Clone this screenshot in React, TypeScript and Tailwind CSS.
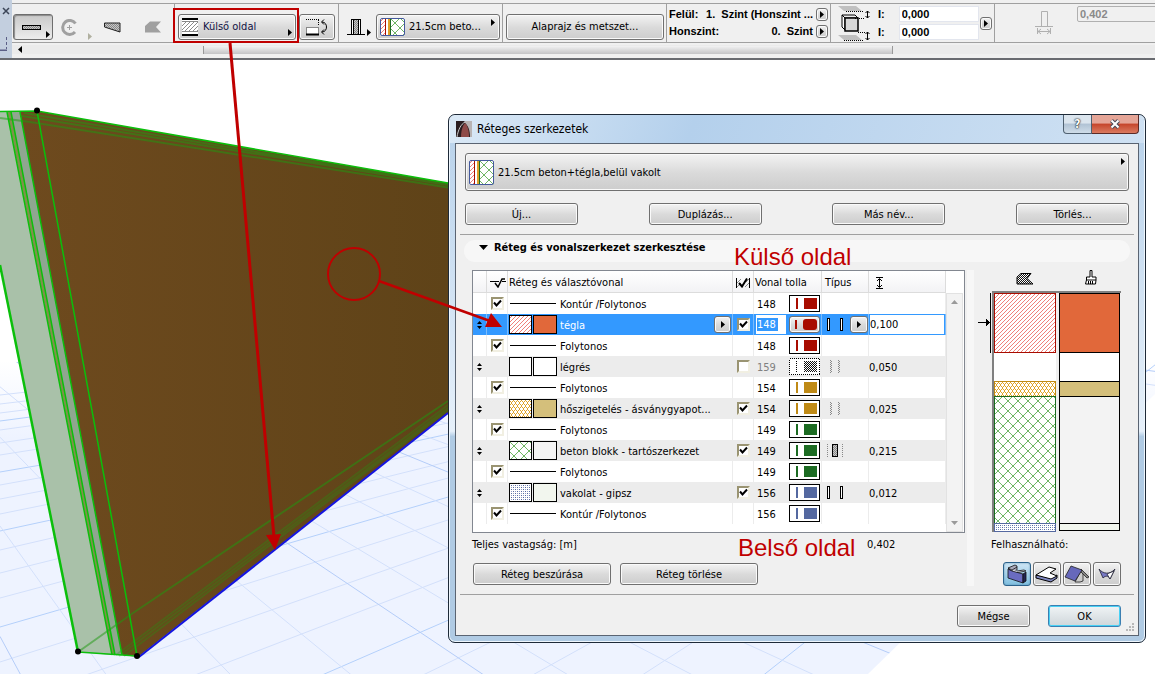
import React from "react";

type Layer = {
    kind: "line" | "skin";
    name: string;
    pen: string;
    color?: string;
    hatch?: string;
    fill?: string;
    checked?: boolean;
    selected?: boolean;
    type?: "shell" | "light" | "core";
    thickness?: string;
};

const layers: Layer[] = [
    { kind: "line", name: "Kontúr /Folytonos", pen: "148", color: "#a80c00" },
    { kind: "skin", name: "tégla", pen: "148", color: "#a80c00", hatch: "url(#brick)", fill: "#e1683a", checked: true, selected: true, type: "shell", thickness: "0,100" },
    { kind: "line", name: "Folytonos", pen: "148", color: "#a80c00" },
    { kind: "skin", name: "légrés", pen: "159", hatch: "#fff", fill: "#fff", checked: false, type: "light", thickness: "0,050" },
    { kind: "line", name: "Folytonos", pen: "154", color: "#bf8a16" },
    { kind: "skin", name: "hőszigetelés - ásványgyapot...", pen: "154", color: "#bf8a16", hatch: "url(#wool)", fill: "#d4bf7b", checked: true, type: "light", thickness: "0,025" },
    { kind: "line", name: "Folytonos", pen: "149", color: "#1c6b22" },
    { kind: "skin", name: "beton blokk - tartószerkezet", pen: "149", color: "#1c6b22", hatch: "url(#block)", fill: "#f3f3f3", checked: true, type: "core", thickness: "0,215" },
    { kind: "line", name: "Folytonos", pen: "149", color: "#1c6b22" },
    { kind: "skin", name: "vakolat - gipsz", pen: "156", color: "#5468a0", hatch: "url(#plaster)", fill: "#f2f6ee", checked: true, type: "shell", thickness: "0,012" },
    { kind: "line", name: "Kontúr /Folytonos", pen: "156", color: "#5468a0" },
];

const button =
    "rounded-[3px] border border-[#707070] bg-linear-to-b from-[#f3f3f3] from-0% via-[#dadada] via-52% to-[#cdcdcd] shadow-[inset_0_0_0_1px_#fafafa] whitespace-nowrap";

function Patterns() {
    return (
        <svg width="0" height="0" className="absolute" aria-hidden="true">
            <defs>
                <pattern id="brick" width="4" height="4" patternUnits="userSpaceOnUse">
                    <rect width="4" height="4" fill="#fff" />
                    <path d="M0 3h1v1h-1zM1 2h1v1h-1zM2 1h1v1h-1zM3 0h1v1h-1z" fill="#f0807a" />
                </pattern>
                <pattern id="wool" width="4" height="6" patternUnits="userSpaceOnUse">
                    <rect width="4" height="6" fill="#fff" />
                    <path d="M0 0h1v2h-1zM1 2h1v1h-1zM2 3h1v2h-1zM1 5h1v1h-1zM3 2h1v1h-1zM3 5h1v1h-1z" fill="#e0a224" />
                </pattern>
                <pattern id="block" width="10" height="10" patternUnits="userSpaceOnUse">
                    <rect width="10" height="10" fill="#fff" />
                    <path d="M0 0L10 10M10 0L0 10" stroke="#5fae52" strokeWidth="0.900" />
                </pattern>
                <pattern id="plaster" width="4" height="4" patternUnits="userSpaceOnUse">
                    <rect width="4" height="4" fill="#fff" />
                    <path d="M0 0h1v1h-1zM2 2h1v1h-1z" fill="#5468a0" />
                    <path d="M2 0h1v1h-1zM0 2h1v1h-1z" fill="#8c9ac4" />
                </pattern>
                <pattern id="gray" width="2" height="2" patternUnits="userSpaceOnUse">
                    <rect width="2" height="2" fill="#fff" />
                    <path d="M0 0h1v1h-1zM1 1h1v1h-1z" fill="#111" />
                </pattern>
                <pattern id="mid" width="2" height="2" patternUnits="userSpaceOnUse">
                    <rect width="2" height="2" fill="#c8c8c8" />
                    <path d="M0 0h1v1h-1zM1 1h1v1h-1z" fill="#888" />
                </pattern>
                <pattern id="diag" width="4" height="4" patternUnits="userSpaceOnUse">
                    <rect width="4" height="4" fill="#fff" />
                    <path d="M0 3h1v1h-1zM1 2h1v1h-1zM2 1h1v1h-1zM3 0h1v1h-1z" fill="#8a8a8a" />
                </pattern>
            </defs>
        </svg>
    );
}

function Triangle({ className = "" }: { className?: string }) {
    return (
        <svg viewBox="0 0 4 7" className={`h-[7px] w-1 shrink-0 ${className}`} fill="currentColor" aria-hidden="true">
            <path d="M0 0L4 3.500L0 7z" />
        </svg>
    );
}

function CompositeIcon({ className }: { className: string }) {
    return (
        <svg viewBox="0 0 25 25" preserveAspectRatio="xMinYMin slice" className={`shrink-0 rounded-[2px] outline-1 -outline-offset-1 outline-[#44599c] ${className}`} shapeRendering="crispEdges" aria-hidden="true">
            <rect width="25" height="25" fill="#fff" />
            <rect x="1" width="4" height="25" fill="url(#brick)" />
            <rect x="5" width="1" height="25" fill="#a80c00" />
            <rect x="8" width="2" height="25" fill="#dfa02a" />
            <rect x="10" width="1" height="25" fill="#1c6b22" />
            <rect x="11" width="14" height="25" fill="url(#block)" />
        </svg>
    );
}

function ArrowButton({ label }: { label: string }) {
    return (
        <button aria-label={label} className={`${button} flex h-[13px] w-3 items-center justify-center`}>
            <Triangle />
        </button>
    );
}

function Toolbar() {
    const group = "relative flex w-[164px] shrink-0 border-r border-b border-[#a0a0a0] h-[39px]";
    const field = "h-4 w-20 border border-[#e3e6ee] bg-white px-0.5 text-[11px] leading-none outline-none";
    return (
        <header className="h-[60px] overflow-hidden border-b-2 border-[#696b70] bg-[#f0f0f0]">
            <div className="flex h-[58px]">
                <div className="flex w-3 shrink-0 flex-col justify-between bg-[#c3cfdf] pt-[7px] pb-[7px]">
                    <button aria-label="Bezárás" className="flex justify-center">
                        <svg viewBox="0 0 8 8" className="size-2" stroke="#3c4658" strokeWidth="1.500">
                            <path d="M1 1l6 6M7 1l-6 6" />
                        </svg>
                    </button>
                    <svg viewBox="0 0 12 15" className="h-[15px] w-3" stroke="#5b5f86" fill="none">
                        <path d="M6.500 1v12" strokeDasharray="3 2" />
                        <path d="M0 14.500h7" strokeWidth="2" />
                    </svg>
                </div>
                <div className="min-w-0 flex-1">
                    <div className="mt-[3px] flex overflow-hidden border-t border-[#a0a0a0]">
                        <div className="flex h-[39px] w-[163px] shrink-0 items-center border-r border-b border-[#a0a0a0] pt-2">
                            <button aria-label="Egyenes fal" className="relative ml-px flex h-[26px] w-10 items-center justify-center rounded-[3px] border border-[#6e6e6e] bg-linear-to-b from-[#c9c9c9] to-[#ececec] shadow-[inset_1px_1px_1px_#8a8a8a]">
                                <svg viewBox="0 0 19 5" className="mr-1 h-[5px] w-[19px]" shapeRendering="crispEdges">
                                    <rect x="0.500" y="0.500" width="18" height="4" fill="url(#mid)" stroke="#000" />
                                </svg>
                                <Triangle className="absolute right-0.5 bottom-px" />
                            </button>
                            <button aria-label="Íves fal" className="ml-2 text-[#a0a0a0]">
                                <svg viewBox="0 0 17 17" className="size-[17px]" fill="none" stroke="currentColor">
                                    <path d="M14.500 4.500A7 7 0 1 0 14 13" strokeWidth="3" />
                                    <path d="M6 8.500h5M8.500 6v5" />
                                </svg>
                            </button>
                            <Triangle className="mt-[18px] ml-2.5 text-[#b0b0a0]" />
                            <button aria-label="Trapéz fal" className="ml-3">
                                <svg viewBox="0 0 17 11" className="h-[11px] w-[17px]">
                                    <path d="M0.500 1h15.500v9L0.500 5z" fill="url(#mid)" stroke="#222" />
                                </svg>
                            </button>
                            <button aria-label="Sokszög fal" className="ml-6">
                                <svg viewBox="0 0 17 12" className="h-3 w-[17px]">
                                    <path d="M5 0.500h11L11 6l5 5.500H0V5z" fill="#a0a0a0" />
                                </svg>
                            </button>
                        </div>
                        <div className={`${group} items-center pt-2 pl-[3px]`}>
                            <button className={`${button} relative flex h-[26px] w-[118px] items-center pl-[3px] text-[11px] text-[#121244]`}>
                                <svg viewBox="0 0 16 18" className="mr-[5px] h-[18px] w-4" shapeRendering="crispEdges">
                                    <rect y="2" width="16" height="14" fill="#fff" />
                                    <rect y="4" width="16" height="10" fill="url(#diag)" />
                                    <path d="M0 3.500h16M0 13.500h16" stroke="#888" />
                                    <path d="M0 1h16M0 17h16" stroke="#000" strokeWidth="2" />
                                </svg>
                                Külső oldal
                                <Triangle className="absolute right-[3px] bottom-[3px] text-black" />
                            </button>
                            <button aria-label="Tükrözés a referenciavonalra" className={`${button} ml-[3px] flex h-[26px] w-9 items-center justify-center`}>
                                <svg viewBox="0 0 22 18" className="h-[18px] w-[22px]" fill="none" stroke="#000">
                                    <path d="M0 1.500h13M12.500 2v6" strokeDasharray="1 1" />
                                    <rect x="0.500" y="9.500" width="12" height="7" fill="#fff" stroke="#888" />
                                    <path d="M0 16.500h13" strokeWidth="2" />
                                    <path d="M16 4c6 0 6 10 0 10M18 1.500L15.500 4L18 6.500M18 11.500L15.500 14L18 16.500" />
                                </svg>
                            </button>
                        </div>
                        <div className={`${group} items-center pt-2`}>
                            <button aria-label="Szerkezet" className="ml-2 flex items-end">
                                <svg viewBox="0 0 18 17" className="h-[17px] w-[18px]" shapeRendering="crispEdges">
                                    <rect x="4.500" y="0.500" width="9" height="15" fill="#fff" stroke="#000" />
                                    <rect x="6.500" y="0.500" width="5" height="15" fill="url(#mid)" stroke="#000" />
                                    <path d="M0 15.500h18" stroke="#000" />
                                </svg>
                                <Triangle className="ml-0.5" />
                            </button>
                            <button className={`${button} relative ml-[5px] flex h-[26px] w-[124px] items-center gap-1 pl-[3px] text-[11px]`}>
                                <CompositeIcon className="h-[18px] w-[25px]" />
                                21.5cm beto...
                                <Triangle className="absolute top-1 right-1" />
                            </button>
                        </div>
                        <div className={`${group} items-center pt-2 pl-[3px]`}>
                            <button className={`${button} h-[26px] w-[158px] text-[11px]`}>Alaprajz és metszet...</button>
                        </div>
                        <div className={`${group} flex-col gap-1 pt-1 pr-0.5 pl-0.5 font-['Liberation_Sans',sans-serif] text-[11px] leading-[13px] font-bold`}>
                            <div className="flex">
                                <span className="mr-auto">Felül:</span>
                                <span className="mr-[3px]">1.&nbsp; Szint (Honszint ...</span>
                                <ArrowButton label="Felső szint választása" />
                            </div>
                            <div className="flex">
                                <span className="mr-auto">Honszint:</span>
                                <span className="mr-[3px]">0.&nbsp; Szint</span>
                                <ArrowButton label="Honszint választása" />
                            </div>
                        </div>
                        <div className={`${group} items-center pl-[7px] font-['Liberation_Sans',sans-serif] text-[11px] font-bold`}>
                            <svg viewBox="0 0 34 36" className="h-9 w-[34px]" stroke="#000" fill="none">
                                <path d="M0 1h18l6 5H6zM0 30h18l6 5H6z" fill="#c0c0c0" stroke="none" />
                                <path d="M4 10l3 3h13l-3-3z" fill="#eee" />
                                <path d="M4 10v12l3 3v-12z" fill="#fff" />
                                <rect x="7" y="13" width="13" height="13" fill="#d8d8d8" strokeWidth="1.500" />
                                <path d="M8 6.500h18M17 13.500h9M20 27.500h7M6 35.500h20" strokeDasharray="1 1" />
                                <path d="M29.500 6v7M27.500 8l2-2l2 2M27.500 11l2 2l2-2M29.500 27v8M27.500 29l2-2l2 2M27.500 33l2 2l2-2" />
                            </svg>
                            <div className="ml-1.5 flex flex-col gap-0.5">
                                <label className="flex items-center gap-3.5">
                                    I:
                                    <input className={field} defaultValue="0,000" />
                                </label>
                                <label className="flex items-center gap-3.5">
                                    I:
                                    <input className={field} defaultValue="0,000" />
                                </label>
                            </div>
                            <span className="ml-px">
                                <ArrowButton label="Magasság beállítása" />
                            </span>
                        </div>
                        <div className="flex h-[39px] flex-1 border-b border-[#a0a0a0] pt-0.5 pl-10">
                            <svg viewBox="0 0 18 24" className="mt-[5px] h-6 w-[18px] shrink-0" fill="none" stroke="#b0b0b0">
                                <path d="M6.500 15V0.500h6V15M0 15.500h18M2.500 17v6M15.500 17v6M3 20.500h12M6 18l-3 2.500l3 2.500M12 18l3 2.500l-3 2.500" />
                            </svg>
                            <input
                                disabled
                                aria-label="Vastagság"
                                defaultValue="0,402"
                                className="ml-6 h-4 w-[120px] shrink-0 rounded-[2px] border border-[#b0b0b0] bg-[#f0f0f0] px-0.5 font-['Liberation_Sans',sans-serif] text-[11px] font-bold text-[#8a8a8a]"
                            />
                        </div>
                    </div>
                    <div className="mt-0.5 flex h-[9px] items-center bg-[#ebebeb]">
                        <Triangle className="mr-[181px] ml-1.5 rotate-180" />
                        <div className="h-2 w-[690px] shrink-0 border-x border-[#999] bg-linear-to-b from-[#f2f2f2] to-[#c4c4c6]" />
                    </div>
                </div>
            </div>
        </header>
    );
}

const alongRight = [395, 404, 413, 421, 430, 443, 455, 472, 485, 499, 514, 531, 550, 573, 598, 627, 662, 705, 750, 815, 880, 970, 1090, 1280];
const alongLeft = [4, 2.6, 1.86, 1.4, 1.03, 0.82, 0.67, 0.6, 0.52, 0.46, 0.41, 0.37, 0.34, 0.31, 0.28, 0.26, 0.24, 0.22, 0.2, 0.18, 0.16, 0.14, 0.13];

function Scene() {
    return (
        <svg viewBox="0 60 1155 614" preserveAspectRatio="xMinYMin slice" className="absolute inset-0 h-full w-full" aria-hidden="true">
            <defs>
                <clipPath id="floor">
                    <path d="M0 362L1155 360V394L868 674H0z" />
                </clipPath>
                <linearGradient id="wall" x1="0" x2="1">
                    <stop offset="0" stopColor="#6e4a1e" />
                    <stop offset="1" stopColor="#5f4318" />
                </linearGradient>
                <linearGradient id="haze" x1="0" x2="0" y1="0" y2="1">
                    <stop offset="0" stopColor="#fff" />
                    <stop offset="0.250" stopColor="#eef3ff" />
                </linearGradient>
            </defs>
            <g clipPath="url(#floor)">
                <path d="M0 360H1155V674H0z" fill="url(#haze)" />
                {alongRight.map((y, i) => (
                    <path key={y} d={`M0 ${y}L1155 ${y - ((y - 250) / 1300) * 1155}`} stroke={i % 4 === 3 ? "#b4d0fb" : "#d3e0fb"} />
                ))}
                {alongLeft.map((k, i) => (
                    <path key={k} d={`M0 ${190 + k * 240}L1155 ${190 + k * 1395}`} stroke={i % 4 === 2 ? "#b4ccf8" : "#d3e0fb"} />
                ))}
            </g>
            <path d="M0 111L7 111L112 655L78 652L0 265z" fill="#a9c1a9" />
            <path d="M7 111h5L116 655h-4z" fill="#80904c" />
            <path d="M11 111h9L122 655h-7z" fill="#8fa690" />
            <path d="M20 112L37 111L448 183V413L138 657L122 655z" fill="url(#wall)" />
            <g stroke="#1e9a10" fill="none" strokeWidth="2" opacity="0.500">
                <path d="M22 116L448 185M24 113L448 184M0 118L30 122L448 187.500" />
                <path d="M78 652L133 613L448 401" />
                <path d="M116 655L448 405M119 656L448 408M124 656L448 410" opacity="0.600" />
            </g>
            <g stroke="#0bbf0b" fill="none" strokeWidth="1.500">
                <path d="M0 111.500L37 111L448 183" />
                <path d="M7 112L112 655M11 112L115 655M20 112L122 655M37 111L137 656" />
                <path d="M78 652L137 656" />
                <path d="M0 265L78 652" strokeWidth="2.500" />
            </g>
            <path d="M139 657L448 413" stroke="#1414e0" strokeWidth="2" />
            <circle cx="37" cy="110.500" r="3" />
            <circle cx="78" cy="651.500" r="3" />
            <circle cx="137" cy="656" r="3" />
        </svg>
    );
}

function CheckBox({ label, checked }: { label: string; checked?: boolean }) {
    return (
        <label className="relative mx-auto block size-[13px]">
            <input
                type="checkbox"
                aria-label={label}
                defaultChecked={checked}
                className="peer block size-[13px] appearance-none border-2 border-t-[#9a9472] border-r-[#f1efe2] border-b-[#f1efe2] border-l-[#9a9472] bg-white"
            />
            <svg viewBox="0 0 13 13" className="pointer-events-none absolute inset-0 hidden size-[13px] peer-checked:block" fill="none" stroke="#000" strokeWidth="2">
                <path d="M3 5.500L5.500 8.500L10 3.500" />
            </svg>
        </label>
    );
}

function PenSwatch({ color, rounded }: { color?: string; rounded?: boolean }) {
    if (rounded) {
        return (
            <button aria-label="Toll színe" className={`${button} flex h-[17px] w-[31px] items-center`}>
                <svg viewBox="0 0 29 15" className="h-[15px] w-[29px]">
                    <path d="M5 3h2v9h-2z" fill={color} />
                    <rect x="13" y="2" width="14" height="11" rx="3" fill={color} />
                </svg>
            </button>
        );
    }
    return (
        <svg viewBox="0 0 31 17" className="h-[17px] w-[31px]" shapeRendering="crispEdges" aria-hidden="true">
            <rect x="0.500" y="0.500" width="30" height="16" fill="#fff" stroke="#000" strokeDasharray={color ? undefined : "1 1"} />
            <path d={color ? "M8 3v11" : "M7.500 3v11"} stroke={color ?? "#000"} strokeWidth={color ? 2 : 1} strokeDasharray={color ? undefined : "1 1"} />
            <rect x="15" y="3" width="13" height="11" fill={color ?? "url(#gray)"} />
        </svg>
    );
}

function TypeIcon({ type }: { type: Layer["type"] }) {
    return (
        <svg viewBox="0 0 18 13" className="h-[13px] w-[18px]" shapeRendering="crispEdges" fill="none" aria-hidden="true">
            {type === "shell" && <path d="M1.500 0.500h2v12h-2zM14.500 0.500h2v12h-2z" fill="#fff" stroke="#000" />}
            {type === "light" && <path d="M4.500 0v13M5.500 1v12M12.500 0v13M13.500 1v12" stroke="#888" strokeDasharray="1 1" />}
            {type === "core" && (
                <>
                    <path d="M1.500 0v13M16.500 0v13" stroke="#888" strokeDasharray="1 1" />
                    <rect x="6.500" y="0.500" width="5" height="12" fill="url(#mid)" stroke="#000" />
                </>
            )}
        </svg>
    );
}

function LayerRow({ layer }: { layer: Layer }) {
    const skin = layer.kind === "skin";
    const cell = `border-r p-0 ${layer.selected ? "border-[#7cbcfb]" : "border-[#ececec]"}`;
    return (
        <tr className={`h-[21px] ${layer.selected ? "bg-[#3399ff]" : skin ? "bg-[#ececec]" : "bg-white"}`}>
            <td className={cell}>
                {skin && (
                    <svg viewBox="0 0 5 8" className="mx-auto h-2 w-[5px]" aria-hidden="true">
                        <path d="M0 3L2.500 0L5 3zM0 5L2.500 8L5 5z" />
                    </svg>
                )}
            </td>
            <td className={cell}>{!skin && <CheckBox label="Vonal megjelenítése" checked />}</td>
            <td className={cell}>
                <div className={`flex items-center pl-px ${layer.selected ? "text-white" : ""}`}>
                    {skin ? (
                        <svg viewBox="0 0 48 19" className="mr-[3px] h-[19px] w-12" shapeRendering="crispEdges" aria-hidden="true">
                            <rect x="0.500" y="0.500" width="22" height="18" fill={layer.hatch} stroke="#000" />
                            <rect x="24.500" y="0.500" width="23" height="18" fill={layer.fill} stroke="#000" />
                        </svg>
                    ) : (
                        <span className="mr-1 ml-px h-px w-[46px] bg-black" />
                    )}
                    <span className="pt-px whitespace-nowrap">{layer.name}</span>
                    {layer.selected && (
                        <button aria-label="Szerkezet választása" className={`${button} mr-px ml-auto flex h-[17px] w-[17px] items-center justify-center text-black`}>
                            <Triangle />
                        </button>
                    )}
                </div>
            </td>
            <td className={cell}>{skin && <CheckBox label="Vonal tolla bekapcsolva" checked={layer.checked} />}</td>
            <td className={cell}>
                <div className="flex items-center justify-between pr-px pl-0.5">
                    {layer.selected ? (
                        <span className="flex h-[19px] w-[30px] items-center bg-white pl-px">
                            <input aria-label="Toll" defaultValue={layer.pen} className="h-[13px] w-[21px] bg-[#3399ff] text-white outline-none" />
                        </span>
                    ) : (
                        <span className={`pt-px pl-px ${layer.color ? "" : "text-[#808080]"}`}>{layer.pen}</span>
                    )}
                    <PenSwatch color={layer.color} rounded={layer.selected} />
                </div>
            </td>
            <td className={cell}>
                {layer.type && (
                    <div className="flex items-center justify-between pl-1">
                        <TypeIcon type={layer.type} />
                        {layer.selected && (
                            <button aria-label="Típus választása" className={`${button} flex h-[17px] w-[18px] items-center justify-center`}>
                                <Triangle />
                            </button>
                        )}
                    </div>
                )}
            </td>
            <td className={`${cell} pt-px`}>
                {layer.selected ? (
                    <input aria-label="Vastagság" defaultValue={layer.thickness} className="-mt-px block h-[21px] w-full border border-[#3399ff] bg-white text-[11px] outline-none" />
                ) : (
                    layer.thickness
                )}
            </td>
        </tr>
    );
}

function LayerTable() {
    const head = "border-r border-b border-[#dcdcdc] px-0 pt-0.5 pb-0 text-left font-normal whitespace-nowrap";
    return (
        <div className="flex h-[263px] border border-[#828790] bg-white">
            <div className="min-w-0 flex-1">
                <table className="w-full table-fixed border-separate border-spacing-0 text-[11px] leading-[15px]">
                    <colgroup>
                        <col className="w-[14px]" />
                        <col className="w-[21px]" />
                        <col />
                        <col className="w-[21px]" />
                        <col className="w-[68px]" />
                        <col className="w-[47px]" />
                        <col className="w-[77px]" />
                    </colgroup>
                    <thead>
                        <tr className="h-[22px] bg-linear-to-b from-white to-[#f2f2f4]">
                            <th className={head} aria-label="Sorrend" />
                            <th className={head} aria-label="Választóvonal">
                                <svg viewBox="0 0 16 10" className="ml-[3px] h-2.5 w-4" fill="none" stroke="#000">
                                    <path d="M0 3.500h9M12 3.500h4" />
                                    <path d="M5 5l3 4l4-8h3" strokeWidth="1.500" />
                                </svg>
                            </th>
                            <th className={`${head} pl-px`}>Réteg és választóvonal</th>
                            <th className={head} aria-label="Kontúr">
                                <svg viewBox="0 0 16 10" className="ml-0.5 h-2.5 w-4" fill="none" stroke="#000">
                                    <path d="M1.500 0v10M14.500 0v10" />
                                    <path d="M2 5l4-4M2 9l4-4M10 9l4-4M11 4l3-3" stroke="#888" />
                                    <path d="M4 5l3 3.500l5-8" strokeWidth="2" />
                                </svg>
                            </th>
                            <th className={`${head} pl-px`}>Vonal tolla</th>
                            <th className={`${head} pl-[3px]`}>Típus</th>
                            <th className={`${head} pl-1.5`} aria-label="Vastagság">
                                <svg viewBox="0 0 9 12" className="h-3 w-[9px]" fill="none" stroke="#000">
                                    <path d="M1 0.500h7M1 11.500h7M4.500 2v8M2 4l2.500-2.500l2.500 2.500M2 8l2.500 2.500l2.500-2.500" />
                                </svg>
                            </th>
                        </tr>
                    </thead>
                    <tbody>
                        {layers.map((layer, i) => (
                            <LayerRow key={i} layer={layer} />
                        ))}
                    </tbody>
                </table>
            </div>
            <div className="mt-[22px] mr-px flex w-[17px] flex-col items-center justify-between border border-[#e2e2e2] bg-[#f3f3f3] py-1.5 text-[#9a9a9a]">
                <svg viewBox="0 0 7 4" className="h-1 w-[7px]" fill="currentColor">
                    <path d="M0 4L3.500 0L7 4z" />
                </svg>
                <svg viewBox="0 0 7 4" className="h-1 w-[7px]" fill="currentColor">
                    <path d="M0 0L3.500 4L7 0z" />
                </svg>
            </div>
        </div>
    );
}

function Preview() {
    return (
        <svg viewBox="0 0 144 242" className="-ml-[13px] h-[242px] w-36" shapeRendering="crispEdges" aria-hidden="true">
            <path d="M15 241V1h128" stroke="#808080" strokeWidth="2" fill="none" />
            <path d="M12.500 2v60" stroke="#000" />
            <path d="M0 31.500h10" stroke="#000" />
            <path d="M8 28l4 3.500l-4 3.500z" />
            <rect x="16" y="2" width="62" height="239" fill="#fff" />
            <rect x="16.500" y="2.500" width="61" height="59" fill="url(#brick)" stroke="#a80c00" />
            <rect x="16.500" y="90.500" width="61" height="15" fill="url(#wool)" stroke="#bf8a16" />
            <rect x="16.500" y="105.500" width="61" height="127" fill="url(#block)" stroke="#1c6b22" />
            <rect x="16.500" y="232.500" width="61" height="8" fill="url(#plaster)" stroke="#5468a0" />
            <g stroke="#000">
                <rect x="81.500" y="2.500" width="60" height="59" fill="#e1683a" />
                <rect x="81.500" y="61.500" width="60" height="29" fill="#fff" />
                <rect x="81.500" y="90.500" width="60" height="15" fill="#d4bf7b" />
                <rect x="81.500" y="105.500" width="60" height="127" fill="#f3f3f3" />
                <rect x="81.500" y="232.500" width="60" height="7" fill="#f2f6ee" />
            </g>
        </svg>
    );
}

function UsageButtons() {
    const item = "flex h-6 w-7 items-center justify-center";
    return (
        <div className="flex gap-0.5">
            <button aria-label="Fal" className="flex h-6 w-7 items-center justify-center rounded-[3px] border border-[#2c628b] bg-linear-to-b from-[#cfe6f5] to-[#7fbfe0] shadow-[inset_0_0_2px_#5b8fb0]">
                <svg viewBox="0 0 20 20" className="h-5 w-5" stroke="#111" strokeWidth="0.800">
                    <path d="M1 4l7-3l2 1v4l-5 2z" fill="#aab" />
                    <path d="M1 4l4 2v4l3-1l11-2l-2-1l-7 1M5 6l5-3" fill="#e4e6f0" />
                    <path d="M1 5l4 2l11 3v9L1 14z" fill="#6a6cc0" />
                    <path d="M16 10l3-2v9l-3 2z" fill="#222452" />
                </svg>
            </button>
            <button aria-label="Födém" className={`${button} ${item}`}>
                <svg viewBox="0 0 24 18" className="h-[18px] w-6" stroke="#000">
                    <path d="M1 10v3l15 4l6-4v-3l-6 3z" fill="#8088c0" />
                    <path d="M1 10L14 2l7 2l-6 4l7 3l-6 3z" fill="#fff" />
                </svg>
            </button>
            <button aria-label="Tető" className={`${button} ${item}`}>
                <svg viewBox="0 0 26 18" className="h-[18px] w-[26px]" stroke="#222" strokeWidth="0.800">
                    <path d="M11 17l6-11l2 1v9l-3 1z" fill="#ccc" />
                    <path d="M17 4l8 8l-2 1l-6-6z" fill="#888" />
                    <path d="M1 12L7 1l11 4l-7 11z" fill="#6668bb" />
                </svg>
            </button>
            <button aria-label="Héj" className={`${button} ${item}`}>
                <svg viewBox="0 0 18 13" className="h-[13px] w-[18px]" stroke="#223" strokeWidth="0.800">
                    <path d="M1 1c4 5 11 6 16 0l-5 10c-1-3-4-4-7-1z" fill="#7779c4" />
                    <path d="M9 6l3 5l4-8z" fill="#fff" />
                </svg>
            </button>
        </div>
    );
}

function CompositeDialog() {
    return (
        <section
            aria-label="Réteges szerkezetek"
            className="absolute top-[54px] left-[448px] w-[698px] rounded-[7px] border border-[#1e2a38] bg-linear-to-b from-[#b7d1ea] via-[#e6f0fa] via-60% to-[#b0cbe4] to-61% px-[6px] pb-[6px] shadow-[inset_0_0_0_1px_#eef6fd]"
        >
            <div className="-mx-[5px] flex h-7 rounded-t-[6px] bg-linear-110 from-[#dbe9f6] from-0% via-[#b4d0ec] via-35% to-[#cfe1f3] pl-1.5">
                <svg viewBox="0 0 16 16" className="mt-1.5 size-4" aria-hidden="true">
                    <rect width="16" height="16" fill="#2a1d20" />
                    <path d="M9 0h7v16h-2C14 9 12 4 8 1z" fill="#b9b4b4" />
                    <path d="M5 16C5 9 7 4 9 2c3 3 4 8 4 14z" fill="#8e4a48" />
                    <path d="M1 16C2 9 5 3 9 1" fill="none" stroke="#ccc" />
                </svg>
                <h1 className="mt-1.5 ml-[5px] text-xs leading-4">Réteges szerkezetek</h1>
                <div className="mr-[5px] ml-auto flex h-[19px]">
                    <button aria-label="Súgó" className="flex w-[29px] items-center justify-center rounded-bl-[4px] border border-t-0 border-[#4f6070] bg-linear-to-b from-[#dbe5ee] from-45% via-[#b0c2d4] via-50% to-[#cfdde9] text-xs font-bold text-white [text-shadow:0_0_2px_#000,0_0_1px_#000]">
                        ?
                    </button>
                    <button aria-label="Bezárás" className="flex w-[47px] items-center justify-center rounded-br-[4px] border border-t-0 border-l-0 border-[#5c2a26] bg-linear-to-b from-[#e5a597] from-45% via-[#c5442a] via-50% to-[#da7a60]">
                        <svg viewBox="0 0 12 10" className="h-2.5 w-3">
                            <path d="M2.500 1.500l7 7M9.500 1.500l-7 7" stroke="#4a4a5a" strokeWidth="4" />
                            <path d="M2.500 1.500l7 7M9.500 1.500l-7 7" stroke="#fff" strokeWidth="2" />
                        </svg>
                    </button>
                </div>
            </div>
            <div className="border border-[#5a6472] bg-[#f0f0f0] px-1 pb-2 text-[11px] leading-[15px]">
                <div className="mx-[5px] mt-[9px]">
                    <button className={`${button} flex h-[38px] w-full items-center gap-1 px-[3px] text-left`}>
                        <CompositeIcon className="size-[25px]" />
                        <span className="flex-1">21.5cm beton+tégla,belül vakolt</span>
                        <Triangle className="mt-1 mb-auto" />
                    </button>
                    <div className="mt-3 flex justify-between">
                        {["Új...", "Duplázás...", "Más név...", "Törlés..."].map((name) => (
                            <button key={name} className={`${button} h-[22px] w-[113px]`}>
                                {name}
                            </button>
                        ))}
                    </div>
                </div>
                <hr className="mt-[9px] border-[#a0a0a0]" />
                <h2 className="mx-1 mt-[5px] flex h-[22px] items-center rounded-full bg-[#f7f7f7] pb-2 pl-[15px] font-bold">
                    <svg viewBox="0 0 9 5" className="mr-1.5 h-[5px] w-[9px]" aria-hidden="true">
                        <path d="M0 0h9L4.500 5z" />
                    </svg>
                    Réteg és vonalszerkezet szerkesztése
                </h2>
                <div className="mt-2 flex">
                    <div className="ml-3 w-[493px]">
                        <LayerTable />
                        <div className="mt-1 flex">
                            <span className="w-[395px]">Teljes vastagság: [m]</span>
                            <output>0,402</output>
                        </div>
                        <div className="mt-[11px] ml-px flex gap-[9px]">
                            <button className={`${button} h-[22px] w-[138px]`}>Réteg beszúrása</button>
                            <button className={`${button} h-[22px] w-[138px]`}>Réteg törlése</button>
                        </div>
                    </div>
                    <div className="ml-0.5 w-[7px] bg-[#f7f7f7]" />
                    <div className="ml-[17px] w-[131px]">
                        <div className="flex h-[21px] items-start gap-[51px] pt-[3px] pl-[25px]">
                            <svg viewBox="0 0 18 12" className="h-3 w-[18px]" aria-hidden="true">
                                <path d="M5 0.500h10l-4 5l6 5.500H1V4z" fill="url(#gray)" stroke="#000" />
                            </svg>
                            <svg viewBox="0 0 12 15" className="-mt-[3px] h-[15px] w-3" fill="#fff" stroke="#000" aria-hidden="true">
                                <path d="M5 0.500h2V7h4v3H1.500V7H5zM1.500 10L0.500 14h10l0.500-4M3.500 11v3M5.500 11v3M7.500 11v3" />
                            </svg>
                        </div>
                        <Preview />
                        <div className="mt-1 mb-2.5">Felhasználható:</div>
                        <div className="ml-3">
                            <UsageButtons />
                        </div>
                    </div>
                </div>
                <hr className="mt-2 border-[#a0a0a0]" />
                <div className="mt-2.5 mr-[13px] flex justify-end gap-[18px]">
                    <button className={`${button} h-[22px] w-[73px]`}>Mégse</button>
                    <button className="h-[22px] w-[73px] rounded-[3px] border border-[#3c7fb1] bg-linear-to-b from-[#f0f4f6] to-[#cfd6da] shadow-[inset_0_0_0_1px_#48d1f5]">OK</button>
                </div>
            </div>
            <svg viewBox="0 0 9 9" className="absolute right-2.5 bottom-2.5 size-[9px]" fill="#b8b8b8" aria-hidden="true">
                <path d="M6 0h2v2h-2zM6 3h2v2h-2zM3 3h2v2h-2zM6 6h2v2h-2zM3 6h2v2h-2zM0 6h2v2h-2z" />
            </svg>
        </section>
    );
}

// red callouts drawn over the toolbar, the wall and the dialog
function Callouts() {
    return (
        <div className="pointer-events-none absolute inset-0 overflow-hidden font-['Liberation_Sans',sans-serif] text-2xl leading-7 text-[#c00000]">
            <svg className="absolute inset-0 h-full w-full" fill="none" stroke="#c00000" aria-hidden="true">
                <rect x="174" y="9" width="124" height="33" strokeWidth="2" />
                <path d="M230 43L274 537" strokeWidth="3" />
                <path d="M266 535l15-1l-6 16z" fill="#c00000" stroke="none" />
                <circle cx="354" cy="274" r="26" strokeWidth="2" />
                <path d="M379 281L490 321" strokeWidth="2.500" />
                <path d="M491 313l11 14l-17 0z" fill="#c00000" stroke="none" />
            </svg>
            <span className="absolute top-[243px] left-[734px]">Külső oldal</span>
            <span className="absolute top-[534px] left-[738px]">Belső oldal</span>
        </div>
    );
}

export default function App() {
    return (
        <div className="relative flex min-h-screen flex-col overflow-hidden bg-white font-['DejaVu_Sans_Condensed','Noto_Sans',sans-serif] text-black">
            <Patterns />
            <Toolbar />
            <main className="relative min-h-[600px] flex-1 overflow-hidden">
                <Scene />
                <CompositeDialog />
            </main>
            <Callouts />
        </div>
    );
}
